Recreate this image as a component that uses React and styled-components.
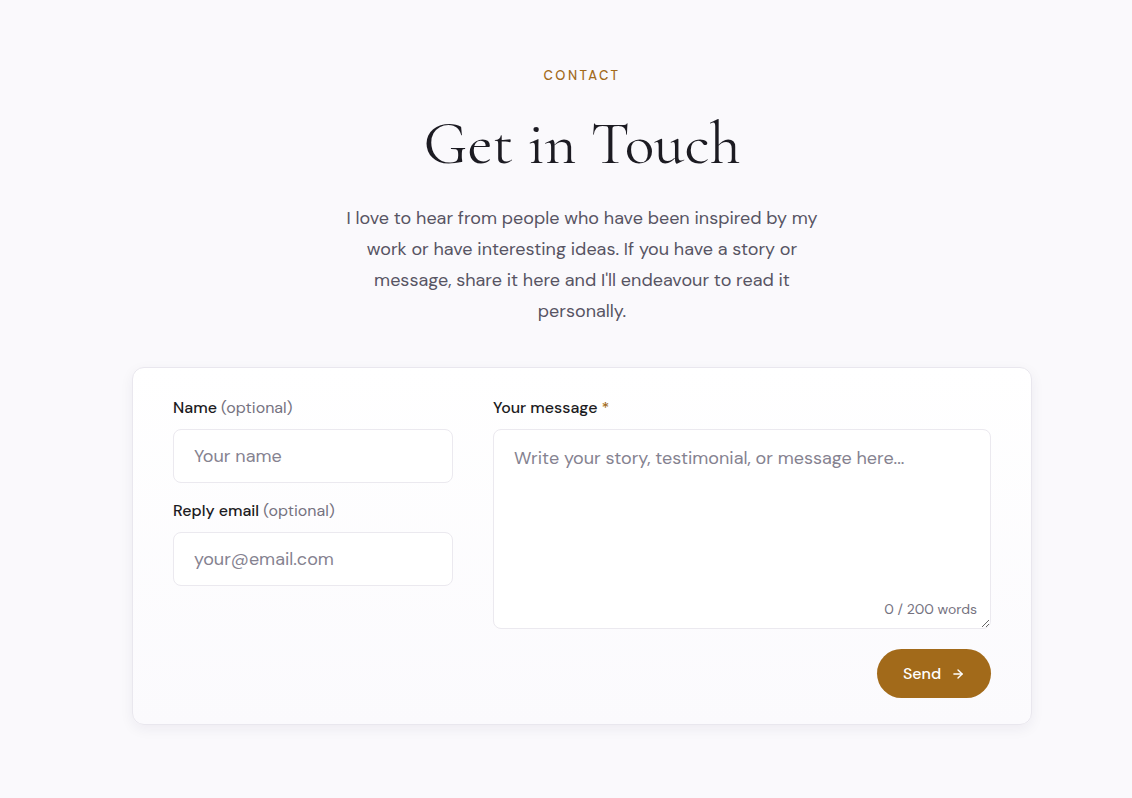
import React from "react";
import styled, { createGlobalStyle } from "styled-components";

const Global = createGlobalStyle`
  html, body { margin: 0; padding: 0; background: #faf9fc; }
  body { font-family: "DM Sans", Inter, "Noto Sans", sans-serif; color: #1c1b22; }
  * { box-sizing: border-box; }
`;

const Page = styled.main`
  min-height: 798px;
  display: flex;
  flex-direction: column;
  align-items: center;
  padding-top: 67px;
  padding-left: 32px;
`;

const Eyebrow = styled.div`
  font-size: 13px;
  line-height: 18px;
  letter-spacing: 2.4px;
  color: #a26a1a;
  font-weight: 500;
`;

const Title = styled.h1`
  margin: 21px 0 0;
  font-family: "Cormorant Garamond", "Liberation Serif", serif;
  font-weight: 400;
  font-size: 61.5px;
  line-height: 76px;
  color: #1c1b22;
`;

const Intro = styled.p`
  margin: 21px 0 0;
  width: 500px;
  text-align: center;
  font-size: 18px;
  line-height: 31px;
  color: #575463;
`;

const Card = styled.form`
  margin-top: 40px;
  width: 900px;
  background: linear-gradient(180deg, #ffffff 0%, #fbfafd 100%);
  border: 1px solid #e9e7ee;
  border-radius: 12px;
  box-shadow: 0 4px 14px rgba(30, 20, 60, 0.06);
  padding: 30px 40px 26px;
  display: grid;
  grid-template-columns: 280px 1fr;
  column-gap: 40px;
`;

const Column = styled.div`
  display: flex;
  flex-direction: column;
`;

const Field = styled.label`
  display: flex;
  flex-direction: column;
  & + & { margin-top: 18px; }
`;

const LabelText = styled.span`
  font-size: 16px;
  line-height: 20px;
  font-weight: 500;
  color: #1c1b22;
  margin-bottom: 11px;
`;

const Hint = styled.span`
  font-weight: 400;
  color: #75727f;
`;

const Required = styled.span`
  color: #a26a1a;
`;

const Input = styled.input`
  height: 54px;
  width: 100%;
  border: 1px solid #ebe9ef;
  border-radius: 8px;
  background: #ffffff;
  padding: 0 20px;
  font-family: inherit;
  font-size: 18px;
  color: #1c1b22;
  outline: none;
  &::placeholder { color: #858290; }
`;

const AreaWrap = styled.div`
  position: relative;
`;

const TextArea = styled.textarea`
  display: block;
  width: 100%;
  height: 200px;
  border: 1px solid #ebe9ef;
  border-radius: 8px;
  background: #ffffff;
  padding: 16px 20px;
  font-family: inherit;
  font-size: 18px;
  line-height: 24px;
  color: #1c1b22;
  outline: none;
  resize: vertical;
  &::placeholder { color: #858290; }
`;

const Counter = styled.span`
  position: absolute;
  right: 14px;
  bottom: 11px;
  font-size: 14px;
  color: #75727f;
`;

const Actions = styled.div`
  display: flex;
  justify-content: flex-end;
  margin-top: 20px;
`;

const SendButton = styled.button`
  height: 49px;
  width: 114px;
  border: none;
  border-radius: 999px;
  background: #a26a1a;
  color: #ffffff;
  font-family: inherit;
  font-size: 16px;
  font-weight: 500;
  display: flex;
  align-items: center;
  justify-content: center;
  gap: 10px;
  cursor: pointer;
`;

const Arrow = () => (
  <svg width="14" height="14" viewBox="0 0 24 24" fill="none" stroke="currentColor" strokeWidth="2.4" strokeLinecap="round" strokeLinejoin="round">
    <path d="M5 12h14" />
    <path d="M12 5l7 7-7 7" />
  </svg>
);

export default function App() {
  return (
    <>
      <Global />
      <Page>
        <Eyebrow>CONTACT</Eyebrow>
        <Title>Get in Touch</Title>
        <Intro>
          I love to hear from people who have been inspired by my work or have interesting ideas. If you have a story or message, share it here and I'll endeavour to read it personally.
        </Intro>
        <Card onSubmit={(e) => e.preventDefault()}>
          <Column>
            <Field>
              <LabelText>Name <Hint>(optional)</Hint></LabelText>
              <Input placeholder="Your name" />
            </Field>
            <Field>
              <LabelText>Reply email <Hint>(optional)</Hint></LabelText>
              <Input placeholder="your@email.com" />
            </Field>
          </Column>
          <Column>
            <Field>
              <LabelText>Your message <Required>*</Required></LabelText>
              <AreaWrap>
                <TextArea placeholder="Write your story, testimonial, or message here..." />
                <Counter>0 / 200 words</Counter>
              </AreaWrap>
            </Field>
            <Actions>
              <SendButton type="submit">Send <Arrow /></SendButton>
            </Actions>
          </Column>
        </Card>
      </Page>
    </>
  );
}
